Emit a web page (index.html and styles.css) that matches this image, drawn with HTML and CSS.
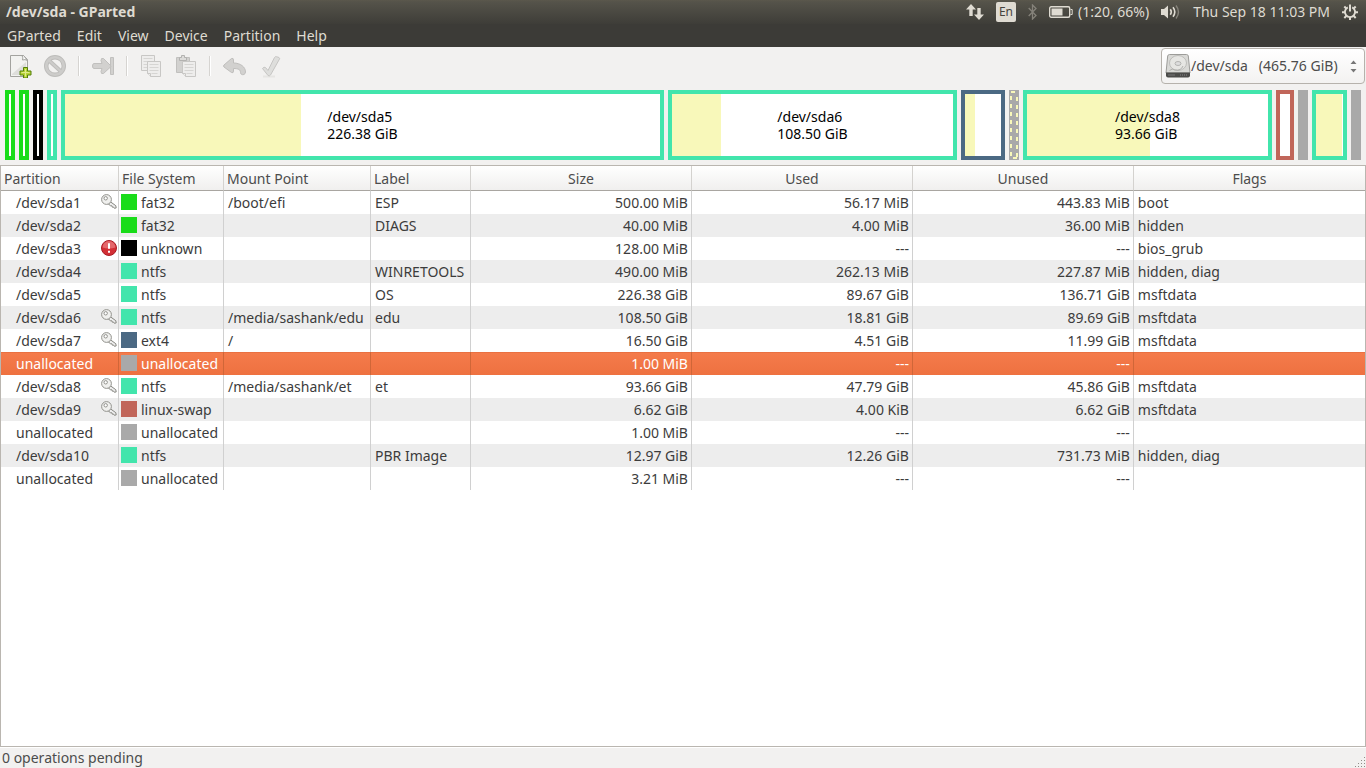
FILE: index.html
```
<!DOCTYPE html>
<html lang="en">
<head>
    <meta charset="UTF-8">
    <meta name="viewport" content="width=device-width, initial-scale=1.0">
    <title>/dev/sda - GParted</title>
    <link rel="stylesheet" href="styles.css">
</head>
<body>
    <!-- shared icons -->
    <svg class="defs" width="0" height="0" aria-hidden="true">
        <symbol id="key" viewBox="0 0 16 16">
            <path d="M9 7.500l5.800 4.200.4 2.200-1.800.4-.8-1.200-1.300.1-.4-1.400-1.500-.1-2.600-2.300z" fill="#eee" stroke="#85857f"/>
            <circle cx="5.500" cy="5.500" r="4.900" fill="#f0f0ee" stroke="#92928d"/>
            <circle cx="4.700" cy="4.300" r="1.700" fill="#fff" stroke="#92928d"/>
        </symbol>
        <symbol id="alert" viewBox="0 0 16 16">
            <circle cx="8" cy="8" r="7.500" fill="#d22f35" stroke="#a91b24"/>
            <path d="M1.500 7.500a6.500 6.500 0 0 1 13 0q-6.500 2-13 0z" fill="#e4686b"/>
            <path d="M8 3.200v5.600M8 10.800v2" stroke="#fff" stroke-width="2"/>
        </symbol>
    </svg>

    <header class="panel">
        <h1>/dev/sda - GParted</h1>
        <div class="indicators">
            <button type="button" aria-label="Network">
                <svg width="18" height="16" viewBox="0 0 18 16"><path d="M5 0l5 5.500H6.700V12H3.300V5.500H0zM13 16l-5-5.500h3.300V4h3.400v6.500H18z" fill="#dfdbd2"/></svg>
            </button>
            <button type="button" class="lang">En</button>
            <button type="button" aria-label="Bluetooth">
                <svg width="9" height="16" viewBox="0 0 9 16"><path d="M.7 4l7.300 7.500-3.500 3.500V1L8 4.500.7 12" fill="none" stroke="#85827a" stroke-width="1.300"/></svg>
            </button>
            <button type="button">
                <svg width="24" height="12" viewBox="0 0 24 12"><rect x=".7" y=".7" width="20" height="10.600" rx="1.500" fill="none" stroke="#dfdbd2" stroke-width="1.400"/><path d="M2.500 2.500h11v7h-11z" fill="#dfdbd2"/><path d="M21.500 3.500h1.700v5h-1.700" fill="none" stroke="#dfdbd2"/></svg>
                (1:20, 66%)
            </button>
            <button type="button" aria-label="Volume">
                <svg width="20" height="16" viewBox="0 0 20 16"><path d="M0 5h3l4-3.500v13L3 11H0z" fill="#dfdbd2"/><path d="M9.300 5.300q2 2.700 0 5.400M12 3.300q3.600 4.700 0 9.400" fill="none" stroke="#dfdbd2" stroke-width="1.600"/><path d="M15 1.500q5 6.500 0 13" fill="none" stroke="#85827a" stroke-width="1.400"/></svg>
            </button>
            <button type="button" class="clock">Thu Sep 18 11:03 PM</button>
            <button type="button" aria-label="Session">
                <svg width="16" height="16" viewBox="0 0 16 16"><path d="M5.800 3.400a5.100 5.100 0 1 0 4.400 0" fill="none" stroke="#dfdbd2" stroke-width="1.900"/><path d="M8 .5v7M0 8.200h3M13 8.200h3M8 13v3M2.300 2.500l2 2M13.700 2.500l-2 2M2.300 14l2.200-2.200M13.700 14l-2.200-2.200" stroke="#dfdbd2" stroke-width="2"/></svg>
            </button>
        </div>
    </header>

    <nav class="menubar">
        <button type="button">GParted</button>
        <button type="button">Edit</button>
        <button type="button">View</button>
        <button type="button">Device</button>
        <button type="button">Partition</button>
        <button type="button">Help</button>
    </nav>

    <div class="toolbar">
        <div class="tools">
            <button type="button" aria-label="New">
                <svg width="24" height="24" viewBox="0 0 24 24"><path d="M2.500 1.500h13l4 4v17h-17z" fill="#f2f2f0" stroke="#a3a39f"/><path d="M4 20l14-12v13H4z" fill="#dededb"/><path d="M14 1.500q1.500 2.500.5 4.500 2.500-1 5 .5l-4-5z" fill="#fff" stroke="#a3a39f"/><path d="M15.500 13.500h4v3.500H23v4h-3.500v3h-4v-3H12v-4h3.500z" fill="#b7d334" stroke="#527f0a"/><path d="M17.500 15v7.500M13.500 18.500h8" stroke="#dfea8b"/></svg>
            </button>
            <button type="button" aria-label="Delete" disabled>
                <svg width="24" height="24" viewBox="0 0 24 24"><circle cx="12" cy="12" r="8.800" fill="none" stroke="#bdbcba" stroke-width="4.400"/><path d="M6 6.500l12 11" stroke="#bdbcba" stroke-width="4"/><circle cx="12" cy="12" r="8.800" fill="none" stroke="#cdccca" stroke-width="2.600"/><path d="M6 6.500l12 11" stroke="#cdccca" stroke-width="2.200"/></svg>
            </button>
            <span class="separator"></span>
            <button type="button" aria-label="Resize/Move" disabled>
                <svg width="24" height="24" viewBox="0 0 24 24"><g fill="#d2d1cf" stroke="#c1c0be" stroke-linejoin="round"><path d="M19.500 3.500h3v17h-3z"/><path d="M3 9.500h8l-1-3q0-3 2.500-2l7 7q.8.800 0 1.500l-7 6.500q-2.500 1-2.500-2l1-3H3q-1.500 0-1.500-2.500T3 9.500z"/></g></svg>
            </button>
            <span class="separator"></span>
            <button type="button" aria-label="Copy" disabled>
                <svg width="24" height="24" viewBox="0 0 24 24"><g fill="#eeedec" stroke="#c8c7c5"><path d="M2.500 1.500h13v15h-13z"/><path d="M4.500 4.500h9M4.500 7.500h9M4.500 10.500h4M4.500 13.500h4" stroke="#d6d5d3"/><path d="M8.500 7.500h13v15h-10l-3-3z"/><path d="M10.500 10.500h9M10.500 13.500h9M10.500 16.500h9M12.500 19.500h6" stroke="#d6d5d3"/><path d="M8.500 19.500h3v3"/></g></svg>
            </button>
            <button type="button" aria-label="Paste" disabled>
                <svg width="24" height="24" viewBox="0 0 24 24"><path d="M2.500 3.500h13v15h-13z" fill="#d2d1cf" stroke="#c1c0be"/><path d="M5.500 6.500v-3h2v-2h3v2h2v3z" fill="#dddcda" stroke="#b3b2b0"/><g fill="#eeedec" stroke="#c8c7c5"><path d="M8.500 7.500h13v15h-10l-3-3z"/><path d="M10.500 10.500h9M10.500 13.500h9M10.500 16.500h9M12.500 19.500h6" stroke="#d6d5d3"/><path d="M8.500 19.500h3v3"/></g></svg>
            </button>
            <span class="separator"></span>
            <button type="button" aria-label="Undo" disabled>
                <svg width="24" height="24" viewBox="0 0 24 24"><path d="M2 11l7.500-6.500q2-.8 2 1.500v3c7 0 12 4 12 9 0 3.500-5 3.500-5 .5 0-3-2.500-4-7-4v2.500q0 2.500-2 1.500L2 13q-1-1 0-2z" fill="#d2d1cf" stroke="#bfbebc" stroke-linejoin="round"/></svg>
            </button>
            <button type="button" aria-label="Apply" disabled>
                <svg width="24" height="24" viewBox="0 0 24 24"><path d="M6 22.500h12" stroke="#e6e5e3" stroke-width="2"/><path d="M5.500 14.500q1.500-2 3-1l2.500 3 6.500-13q.8-1.300 2-.8l2.500.8q1 .5.500 1.500l-9 16q-1 1.500-2.500.5z" fill="#dededc" stroke="#c6c5c3" stroke-linejoin="round"/></svg>
            </button>
        </div>
        <label class="device">
            <svg width="26" height="26" viewBox="0 0 26 26"><path d="M4.500 1.500h17q1.500 0 1.800 1.500l1.700 17H1L2.700 3q.3-1.500 1.800-1.500z" fill="#d9d9d6" stroke="#9c9c99"/><ellipse cx="13" cy="10" rx="8.500" ry="7.500" fill="#e6e6e3" stroke="#bdbdba"/><ellipse cx="13" cy="10.500" rx="3" ry="2" fill="#ddd" stroke="#b5b5b2"/><path d="M4.500 17.500q3-2.500 5.500-.5 6 1 8-4" fill="none" stroke="#b0b0ad"/><path d="M1 19.500h24v3q0 2-2 2H3q-2 0-2-2z" fill="#4c4c4a"/><path d="M3 22h7" stroke="#777"/><path d="M15 22h7" stroke="#888" stroke-dasharray="1 1"/></svg>
            <select aria-label="Device">
                <option>/dev/sda&nbsp;&nbsp; (465.76 GiB)</option>
            </select>
            <svg class="arrows" width="7" height="13" viewBox="0 0 7 13"><path d="M.5 4l3-3.500 3 3.500zM.5 9l3 3.500 3-3.500z" fill="#777"/></svg>
        </label>
    </div>

    <main>
        <div class="disk">
            <div class="part tiny fat32"></div>
            <div class="part tiny fat32"></div>
            <div class="part tiny unknown"></div>
            <div class="part tiny ntfs"></div>
            <div class="part ntfs" style="flex-grow: 595; --used: 39.7%"><p>/dev/sda5<br>226.38 GiB</p></div>
            <div class="part ntfs" style="flex-grow: 281; --used: 17.4%"><p>/dev/sda6<br>108.50 GiB</p></div>
            <div class="part ext4" style="flex-grow: 36; --used: 28%"></div>
            <div class="part tiny unallocated selected">
                <svg width="10" height="70" viewBox="0 0 10 70"><path d="M2 6v60M8 7v60" stroke="#f8f8ba" stroke-width="2" stroke-dasharray="4 4"/><path d="M2 2h4M4 68h4" stroke="#f8f8ba" stroke-width="2"/></svg>
            </div>
            <div class="part ntfs" style="flex-grow: 241; --used: 51%"><p>/dev/sda8<br>93.66 GiB</p></div>
            <div class="part swap" style="flex-grow: 10"></div>
            <div class="part tiny unallocated"></div>
            <div class="part ntfs" style="flex-grow: 27; --used: 96%"></div>
            <div class="part tiny unallocated"></div>
        </div>

        <div class="list">
            <table>
                <thead>
                    <tr>
                        <th class="col-partition">Partition</th>
                        <th class="col-fs">File System</th>
                        <th class="col-mount">Mount Point</th>
                        <th class="col-label">Label</th>
                        <th class="col-size">Size</th>
                        <th class="col-size">Used</th>
                        <th class="col-size">Unused</th>
                        <th class="col-flags">Flags</th>
                    </tr>
                </thead>
                <tbody>
                    <tr><td><div class="name">/dev/sda1<svg><use href="#key"/></svg></div></td><td><div class="fs"><i class="fat32"></i>fat32</div></td><td>/boot/efi</td><td>ESP</td><td>500.00 MiB</td><td>56.17 MiB</td><td>443.83 MiB</td><td>boot</td></tr>
                    <tr><td><div class="name">/dev/sda2</div></td><td><div class="fs"><i class="fat32"></i>fat32</div></td><td></td><td>DIAGS</td><td>40.00 MiB</td><td>4.00 MiB</td><td>36.00 MiB</td><td>hidden</td></tr>
                    <tr><td><div class="name">/dev/sda3<svg><use href="#alert"/></svg></div></td><td><div class="fs"><i class="unknown"></i>unknown</div></td><td></td><td></td><td>128.00 MiB</td><td>---</td><td>---</td><td>bios_grub</td></tr>
                    <tr><td><div class="name">/dev/sda4</div></td><td><div class="fs"><i class="ntfs"></i>ntfs</div></td><td></td><td>WINRETOOLS</td><td>490.00 MiB</td><td>262.13 MiB</td><td>227.87 MiB</td><td>hidden, diag</td></tr>
                    <tr><td><div class="name">/dev/sda5</div></td><td><div class="fs"><i class="ntfs"></i>ntfs</div></td><td></td><td>OS</td><td>226.38 GiB</td><td>89.67 GiB</td><td>136.71 GiB</td><td>msftdata</td></tr>
                    <tr><td><div class="name">/dev/sda6<svg><use href="#key"/></svg></div></td><td><div class="fs"><i class="ntfs"></i>ntfs</div></td><td>/media/sashank/edu</td><td>edu</td><td>108.50 GiB</td><td>18.81 GiB</td><td>89.69 GiB</td><td>msftdata</td></tr>
                    <tr><td><div class="name">/dev/sda7<svg><use href="#key"/></svg></div></td><td><div class="fs"><i class="ext4"></i>ext4</div></td><td>/</td><td></td><td>16.50 GiB</td><td>4.51 GiB</td><td>11.99 GiB</td><td>msftdata</td></tr>
                    <tr class="active"><td><div class="name">unallocated</div></td><td><div class="fs"><i class="unallocated"></i>unallocated</div></td><td></td><td></td><td>1.00 MiB</td><td>---</td><td>---</td><td></td></tr>
                    <tr><td><div class="name">/dev/sda8<svg><use href="#key"/></svg></div></td><td><div class="fs"><i class="ntfs"></i>ntfs</div></td><td>/media/sashank/et</td><td>et</td><td>93.66 GiB</td><td>47.79 GiB</td><td>45.86 GiB</td><td>msftdata</td></tr>
                    <tr><td><div class="name">/dev/sda9<svg><use href="#key"/></svg></div></td><td><div class="fs"><i class="swap"></i>linux-swap</div></td><td></td><td></td><td>6.62 GiB</td><td>4.00 KiB</td><td>6.62 GiB</td><td>msftdata</td></tr>
                    <tr><td><div class="name">unallocated</div></td><td><div class="fs"><i class="unallocated"></i>unallocated</div></td><td></td><td></td><td>1.00 MiB</td><td>---</td><td>---</td><td></td></tr>
                    <tr><td><div class="name">/dev/sda10</div></td><td><div class="fs"><i class="ntfs"></i>ntfs</div></td><td></td><td>PBR Image</td><td>12.97 GiB</td><td>12.26 GiB</td><td>731.73 MiB</td><td>hidden, diag</td></tr>
                    <tr><td><div class="name">unallocated</div></td><td><div class="fs"><i class="unallocated"></i>unallocated</div></td><td></td><td></td><td>3.21 MiB</td><td>---</td><td>---</td><td></td></tr>
                </tbody>
            </table>
        </div>
    </main>

    <footer>
        <span>0 operations pending</span>
        <svg width="11" height="11" viewBox="0 0 11 11"><path d="M9 0h1v1H9zM6 3h1v1H6zM9 3h1v1H9zM3 6h1v1H3zM6 6h1v1H6zM9 6h1v1H9zM0 9h1v1H0zM3 9h1v1H3zM6 9h1v1H6zM9 9h1v1H9z" fill="#918d87"/></svg>
    </footer>
</body>
</html>
```
FILE: styles.css
```
* {
    box-sizing: border-box;
}

body {
    margin: 0;
    min-height: 100vh;
    display: flex;
    flex-direction: column;
    background-color: #f2f1f0;
    color: #3c3c3c;
    font-family: "Noto Sans", "Open Sans", sans-serif;
    font-size: 14px;
    line-height: 20px;
}

svg {
    flex-shrink: 0;
}

.defs {
    position: absolute;
}

button,
select {
    margin: 0;
    padding: 0;
    border: none;
    background: none;
    color: inherit;
    font: inherit;
}

/* top panel */
.panel {
    display: flex;
    justify-content: space-between;
    align-items: center;
    height: 24px;
    padding: 0 8px 0 6px;
    background: linear-gradient(#5b584c, #55534a 8%, #3e3d38);
    color: #dfdbd2;
}

.panel h1 {
    margin: 0;
    font-size: 14px;
    font-weight: bold;
}

.indicators {
    display: flex;
    align-items: center;
    gap: 12px;
}

.indicators button {
    display: flex;
    align-items: center;
    gap: 5px;
}

.indicators .lang {
    padding: 0 3px;
    border-radius: 2px;
    background-color: #dfdbd2;
    color: #45433d;
    font-size: 12px;
}

.menubar {
    display: flex;
    gap: 16px;
    height: 23px;
    padding: 0 7px;
    background-color: #3c3b37;
    color: #dfdbd2;
}

/* toolbar */
.toolbar {
    display: flex;
    justify-content: space-between;
    height: 38px;
    padding: 1px 1px 0 8px;
}

.tools {
    display: flex;
    align-items: center;
    gap: 11px;
    height: 36px;
}

.tools button {
    height: 24px;
}

.separator {
    width: 2px;
    height: 20px;
    border-left: 1px solid #d6d4d1;
    background-color: #fff;
}

.device {
    display: flex;
    align-items: center;
    height: 36px;
    padding: 0 7px 0 3px;
    border: 1px solid #b6b2ac;
    border-radius: 4px;
    background: linear-gradient(#fff, #f3f2f1);
    color: #4c4c4c;
}

.device select {
    appearance: none;
    width: 159px;
}

.device .arrows {
    margin-left: auto;
}

/* partition colours */
.fat32 { --fs: #19dc19; }
.ntfs { --fs: #42e5ac; }
.ext4 { --fs: #4b6983; }
.swap { --fs: #c1665a; }
.unknown { --fs: #000; }
.unallocated { --fs: #a9a9a9; }

main {
    flex: 1;
    display: flex;
    flex-direction: column;
    gap: 5px;
    padding-top: 5px;
}

.disk {
    display: flex;
    gap: 4px;
    height: 70px;
    padding: 0 5px;
}

.part {
    --used: 0%;
    flex: 1 1 0;
    display: flex;
    align-items: center;
    justify-content: center;
    border: 4px solid var(--fs);
    background: linear-gradient(to right, #f8f8ba var(--used), #fff var(--used)) padding-box;
    color: #000;
    line-height: 17px;
}

.part.tiny {
    flex: 0 0 10px;
}

.part.unallocated {
    border: none;
    background: var(--fs);
}

.part p {
    margin: 0;
}

/* partition list */
.list {
    flex: 1;
    border: 1px solid #bab6b0;
    background-color: #fff;
}

table {
    width: 100%;
    table-layout: fixed;
    border-collapse: separate;
    border-spacing: 0;
}

th {
    height: 25px;
    padding: 2px 3px 0;
    border-right: 1px solid #d4d2cf;
    border-bottom: 1px solid #a9a6a1;
    background: linear-gradient(#fff, #f0efee);
    color: #4c4c4c;
    font-weight: normal;
    text-align: left;
}

.col-partition { width: 118px; }
.col-fs { width: 105px; }
.col-mount { width: 147px; }
.col-label { width: 100px; }
.col-size { width: 16.2%; }

.col-size,
.col-flags {
    text-align: center;
}

td {
    height: 23px;
    padding: 0 3px 0 4px;
    border-right: 1px solid #d0d0d0;
    white-space: nowrap;
}

th:last-child,
td:last-child {
    border-right: none;
}

td:nth-child(1) {
    padding: 0 1px 0 15px;
}

td:nth-child(2) {
    padding-left: 2px;
}

td:nth-child(n+5):nth-child(-n+7) {
    text-align: right;
}

tbody tr:nth-child(even) {
    background-color: #ededed;
}

tbody tr.active {
    background: linear-gradient(#e2683a, #f47b4b 5%, #ee7140);
    color: #fff;
}

.active td {
    border-right-color: #d06638;
}

.name,
.fs {
    display: flex;
    align-items: center;
}

.name svg,
.fs i {
    width: 16px;
    height: 16px;
    margin-bottom: 2px;
}

.name svg {
    margin-left: auto;
}

.fs {
    gap: 4px;
}

.fs i {
    background-color: var(--fs);
}

footer {
    display: flex;
    justify-content: space-between;
    align-items: flex-end;
    height: 21px;
    padding-left: 2px;
    border-top: 1px solid #fff;
    color: #4c4c4c;
}
```
